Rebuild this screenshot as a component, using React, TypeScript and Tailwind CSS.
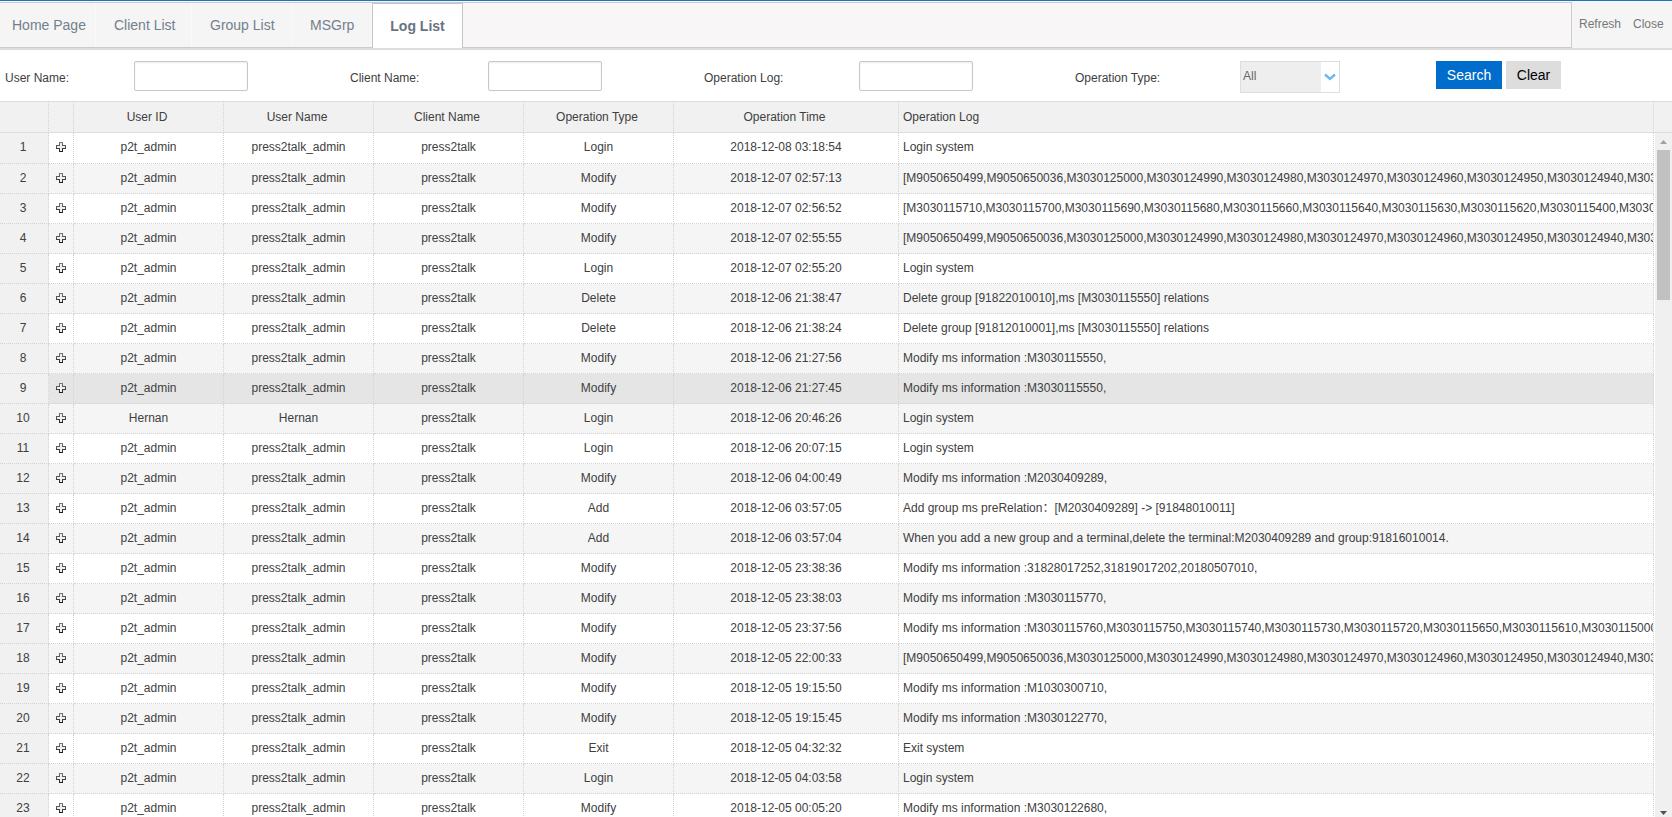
import { useState } from "react";

type LogRow = {
  userId: string;
  userName: string;
  type: string;
  time: string;
  log: string;
};

const tabs = [
  { name: "Home Page", cls: "w-[96px] pl-[12px]" },
  { name: "Client List", cls: "w-[96px] pl-[18px]" },
  { name: "Group List", cls: "w-[100px] pl-[18px]" },
  { name: "MSGrp", cls: "w-[80px] pl-[18px]" },
];

const msList =
  "[M9050650499,M9050650036,M3030125000,M3030124990,M3030124980,M3030124970,M3030124960,M3030124950,M3030124940,M3030124930]";

const entry = (type: string, time: string, log: string, user?: string): LogRow => ({
  userId: user ?? "p2t_admin",
  userName: user ?? "press2talk_admin",
  type,
  time,
  log,
});

const rows: LogRow[] = [
  entry("Login", "2018-12-08 03:18:54", "Login system"),
  entry("Modify", "2018-12-07 02:57:13", msList),
  entry(
    "Modify",
    "2018-12-07 02:56:52",
    "[M3030115710,M3030115700,M3030115690,M3030115680,M3030115660,M3030115640,M3030115630,M3030115620,M3030115400,M3030115390]",
  ),
  entry("Modify", "2018-12-07 02:55:55", msList),
  entry("Login", "2018-12-07 02:55:20", "Login system"),
  entry("Delete", "2018-12-06 21:38:47", "Delete group [91822010010],ms [M3030115550] relations"),
  entry("Delete", "2018-12-06 21:38:24", "Delete group [91812010001],ms [M3030115550] relations"),
  entry("Modify", "2018-12-06 21:27:56", "Modify ms information :M3030115550,"),
  entry("Modify", "2018-12-06 21:27:45", "Modify ms information :M3030115550,"),
  entry("Login", "2018-12-06 20:46:26", "Login system", "Hernan"),
  entry("Login", "2018-12-06 20:07:15", "Login system"),
  entry("Modify", "2018-12-06 04:00:49", "Modify ms information :M2030409289,"),
  entry("Add", "2018-12-06 03:57:05", "Add group ms preRelation\uff1a[M2030409289] -> [91848010011]"),
  entry(
    "Add",
    "2018-12-06 03:57:04",
    "When you add a new group and a terminal,delete the terminal:M2030409289 and group:91816010014.",
  ),
  entry("Modify", "2018-12-05 23:38:36", "Modify ms information :31828017252,31819017202,20180507010,"),
  entry("Modify", "2018-12-05 23:38:03", "Modify ms information :M3030115770,"),
  entry(
    "Modify",
    "2018-12-05 23:37:56",
    "Modify ms information :M3030115760,M3030115750,M3030115740,M3030115730,M3030115720,M3030115650,M3030115610,M3030115000,",
  ),
  entry("Modify", "2018-12-05 22:00:33", msList),
  entry("Modify", "2018-12-05 19:15:50", "Modify ms information :M1030300710,"),
  entry("Modify", "2018-12-05 19:15:45", "Modify ms information :M3030122770,"),
  entry("Exit", "2018-12-05 04:32:32", "Exit system"),
  entry("Login", "2018-12-05 04:03:58", "Login system"),
  entry("Modify", "2018-12-05 00:05:20", "Modify ms information :M3030122680,"),
];

const cell =
  "border-r border-b border-dotted border-[#d3d3d3] pb-[2px] overflow-hidden whitespace-nowrap leading-4";
const head = "border-r border-dotted border-r-[#d3d3d3] font-normal whitespace-nowrap";
const input =
  "h-[30px] w-[114px] rounded-[2px] border border-[#c8c8c8] bg-white px-1 shadow-[inset_0_1px_2px_rgba(0,0,0,0.08)]";

function PlusIcon() {
  return (
    <svg width="10" height="10" viewBox="0 0 10 10" className="block">
      <defs>
        <linearGradient id="plus" x1="0" y1="0" x2="0" y2="1">
          <stop offset="0" stopColor="#777777" />
          <stop offset="1" stopColor="#222222" />
        </linearGradient>
      </defs>
      <path
        d="M3.5 .5h3v3h3v3h-3v3h-3v-3h-3v-3h3z"
        fill="#efefef"
        stroke="url(#plus)"
        shapeRendering="crispEdges"
      />
    </svg>
  );
}

function TabBar() {
  return (
    <header className="flex h-[50px] shrink-0 border-t border-t-[#1a76b4] border-b-2 border-b-[#dddddd] bg-[#f5f5f5] pt-px">
      <nav className="flex flex-1 border border-l-0 border-[#cccccc] bg-[#f8f6f7]">
        {tabs.map((t) => (
          <a
            key={t.name}
            href="#"
            className={`flex items-center border-r border-[#f9f9f9] bg-[#f5f5f5] pb-px text-sm text-[#73808c] ${t.cls}`}
          >
            {t.name}
          </a>
        ))}
        <a
          href="#"
          aria-current="page"
          className="-mb-px flex w-[91px] items-center justify-center border border-b-0 border-[#c5c5c5] bg-white text-sm font-bold text-[#68737f]"
        >
          Log List
        </a>
      </nav>
      <div className="flex w-[100px] items-center gap-3 pb-[3px] pl-[7px] text-xs text-[#777777]">
        <button type="button">Refresh</button>
        <button type="button">Close</button>
      </div>
    </header>
  );
}

function Filters() {
  const [type, setType] = useState("All");
  return (
    <form
      onSubmit={(e) => e.preventDefault()}
      className="grid h-[51px] shrink-0 grid-cols-[129fr_216fr_138fr_216fr_155fr_216fr_165fr_196fr_236fr] items-start pt-[11px] pl-[5px] text-xs leading-[34px]"
    >
      <label htmlFor="userName">User Name:</label>
      <input id="userName" type="text" className={input} />
      <label htmlFor="clientName">Client Name:</label>
      <input id="clientName" type="text" className={input} />
      <label htmlFor="opLog">Operation Log:</label>
      <input id="opLog" type="text" className={input} />
      <label htmlFor="opType">Operation Type:</label>
      <div className="relative h-8 w-[100px]">
        <select
          id="opType"
          value={type}
          onChange={(e) => setType(e.target.value)}
          className="block h-8 w-full appearance-none border border-[#dddddd] bg-[linear-gradient(to_right,#eeeeee_80px,#ffffff_80px)] pb-[2px] pl-[2px] leading-4 text-[#666666]"
        >
          <option>All</option>
          <option>Login</option>
          <option>Modify</option>
          <option>Delete</option>
          <option>Add</option>
          <option>Exit</option>
        </select>
        <svg
          width="12"
          height="8"
          viewBox="0 0 12 8"
          className="pointer-events-none absolute top-3 right-1"
        >
          <path d="M1 1.5L6 6L11 1.5" fill="none" stroke="#6cb8ee" strokeWidth="2.4" />
        </svg>
      </div>
      <div className="flex gap-1 text-sm">
        <button type="submit" className="h-7 w-[66px] bg-[#006dcc] leading-7 text-white">
          Search
        </button>
        <button type="reset" className="h-7 w-[55px] bg-[#dddddd] leading-7 text-black">
          Clear
        </button>
      </div>
    </form>
  );
}

function LogTable() {
  return (
    <table className="w-full table-fixed border-separate border-spacing-0 text-center text-xs">
      <colgroup>
        <col className="w-[49px]" />
        <col className="w-[25px]" />
        <col className="w-[150px]" />
        <col className="w-[150px]" />
        <col className="w-[150px]" />
        <col className="w-[150px]" />
        <col className="w-[225px]" />
        <col />
      </colgroup>
      <thead>
        <tr className="h-[31px] bg-[#f1f1f1] [&>th]:border-b [&>th]:border-b-[#dddddd] [&>th]:[border-bottom-style:solid]">
          <th className={head}></th>
          <th className={head}></th>
          <th className={`${head} pr-[3px]`}>User ID</th>
          <th className={`${head} pr-[3px]`}>User Name</th>
          <th className={`${head} pr-[3px]`}>Client Name</th>
          <th className={`${head} pr-[3px]`}>Operation Type</th>
          <th className={`${head} pr-[3px]`}>Operation Time</th>
          <th className={`${head} pl-1 text-left`}>Operation Log</th>
        </tr>
      </thead>
      <tbody>
        {rows.map((r, i) => (
          <tr
            key={r.time}
            className={`h-[30px] first:h-[31px] ${i === 8 ? "bg-[#e5e5e5]" : i % 2 ? "bg-[#f5f5f5]" : "bg-white"}`}
          >
            <td className={`${cell} bg-[#f1f1f1] pr-[2px]`}>{i + 1}</td>
            <td className={cell}>
              <button type="button" aria-label="Expand row" className="ml-[7px] block">
                <PlusIcon />
              </button>
            </td>
            <td className={cell}>{r.userId}</td>
            <td className={cell}>{r.userName}</td>
            <td className={cell}>press2talk</td>
            <td className={cell}>{r.type}</td>
            <td className={cell}>{r.time}</td>
            <td className={`${cell} pl-1 text-left`}>{r.log}</td>
          </tr>
        ))}
      </tbody>
    </table>
  );
}

function ScrollBar() {
  return (
    <div className="flex w-[18px] shrink-0 flex-col">
      <div className="h-[31px] shrink-0 border-b border-[#dddddd] bg-[#f1f1f1]" />
      <div className="ml-px flex flex-1 flex-col items-center bg-[#f0f0f0]">
        <svg width="7" height="4" viewBox="0 0 7 4" className="mt-[7px] mb-[6px] shrink-0">
          <path d="M0 4L3.5 0L7 4z" fill="#a0a0a0" />
        </svg>
        <div className="h-[150px] w-[13px] shrink-0 bg-[#c1c1c1]" />
        <svg width="7" height="4" viewBox="0 0 7 4" className="mt-auto mb-[2px] shrink-0">
          <path d="M0 0h7L3.5 4z" fill="#505050" />
        </svg>
      </div>
    </div>
  );
}

export default function App() {
  return (
    <div className="flex h-screen flex-col overflow-hidden bg-white font-['Liberation_Sans','Noto_Sans_CJK_SC',sans-serif] text-[#404040]">
      <TabBar />
      <Filters />
      <main className="flex min-h-0 flex-1 border-t border-[#dddddd]">
        <div className="min-w-0 flex-1 overflow-hidden">
          <LogTable />
        </div>
        <ScrollBar />
      </main>
    </div>
  );
}
